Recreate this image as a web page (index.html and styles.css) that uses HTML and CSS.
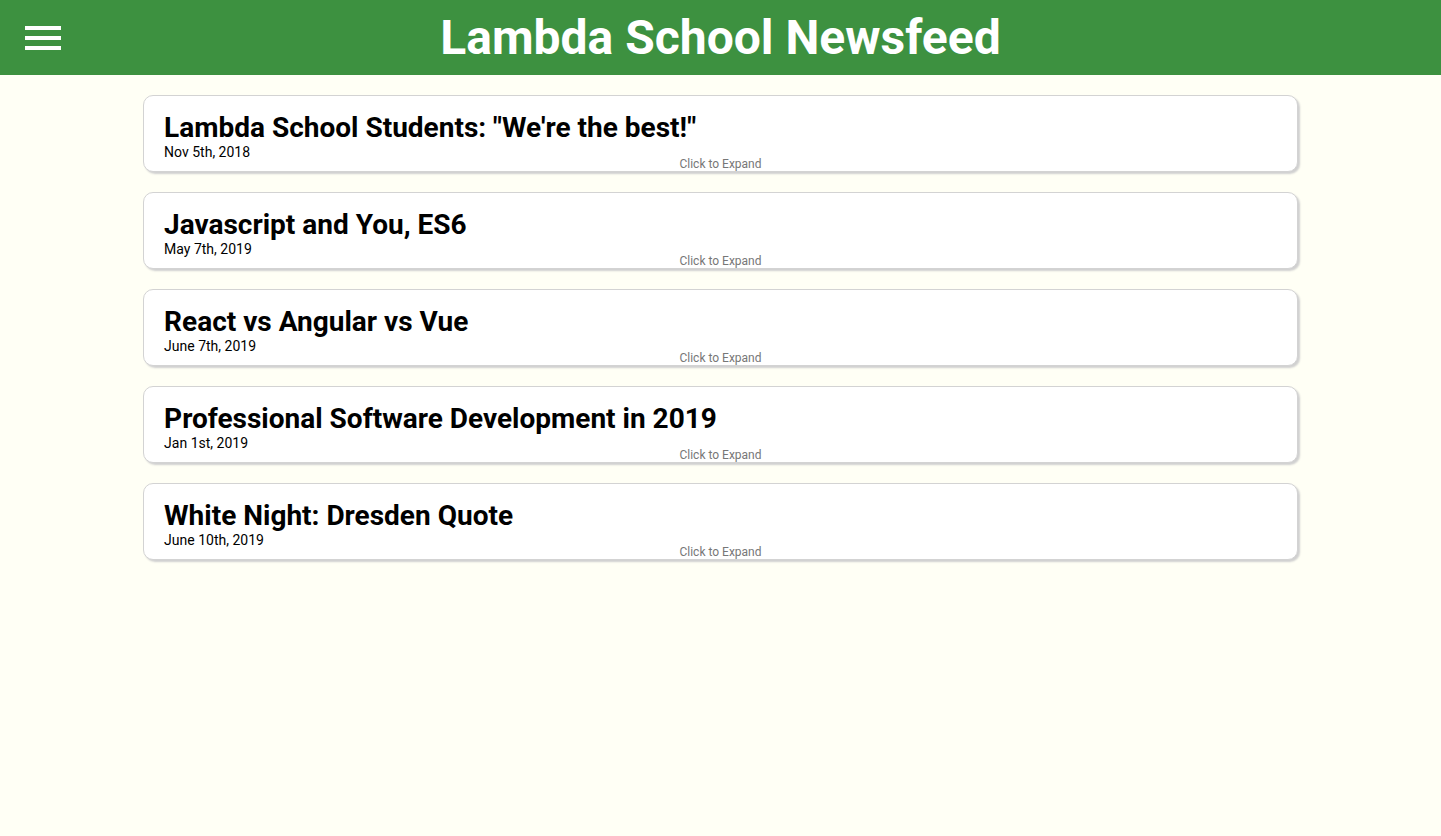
FILE: index.html
```html
<!DOCTYPE html>
<html lang="en">
<head>
<meta charset="utf-8">
<title>Lambda School Newsfeed</title>
<link rel="stylesheet" href="styles.css">
</head>
<body>
<header class="header">
  <div class="menu-button" aria-label="Menu">
    <span class="bar"></span>
    <span class="bar"></span>
    <span class="bar"></span>
  </div>
  <h1 class="title">Lambda School Newsfeed</h1>
</header>
<main class="articles">
  <div class="article">
    <h2 class="article-title">Lambda School Students: "We're the best!"</h2>
    <p class="date">Nov 5th, 2018</p>
    <span class="expand-button">Click to Expand</span>
  </div>
  <div class="article">
    <h2 class="article-title">Javascript and You, ES6</h2>
    <p class="date">May 7th, 2019</p>
    <span class="expand-button">Click to Expand</span>
  </div>
  <div class="article">
    <h2 class="article-title">React vs Angular vs Vue</h2>
    <p class="date">June 7th, 2019</p>
    <span class="expand-button">Click to Expand</span>
  </div>
  <div class="article">
    <h2 class="article-title">Professional Software Development in 2019</h2>
    <p class="date">Jan 1st, 2019</p>
    <span class="expand-button">Click to Expand</span>
  </div>
  <div class="article">
    <h2 class="article-title">White Night: Dresden Quote</h2>
    <p class="date">June 10th, 2019</p>
    <span class="expand-button">Click to Expand</span>
  </div>
</main>
</body>
</html>
```

FILE: styles.css
```css
html, body {
  margin: 0;
  padding: 0;
}

body {
  background: #fffff5;
  font-family: Roboto, "Liberation Sans", Arial, sans-serif;
  color: #000;
  min-height: 836px;
}

.header {
  position: relative;
  height: 75px;
  background: #3d9140;
  display: flex;
  align-items: center;
  justify-content: center;
}

.menu-button {
  position: absolute;
  left: 25px;
  top: 26px;
  display: flex;
  flex-direction: column;
  gap: 6px;
}

.bar {
  display: block;
  width: 36px;
  height: 4px;
  background: #fff;
}

.title {
  margin: 0;
  color: #fff;
  font-size: 48px;
  font-weight: 700;
  line-height: 75px;
}

.articles {
  display: flex;
  flex-direction: column;
  padding-top: 20px;
}

.article {
  position: relative;
  box-sizing: border-box;
  width: calc(80% + 2px);
  height: 77px;
  margin: 0 auto 20px;
  padding: 18px 20px 0;
  background: #fff;
  border: 1px solid #d3d3d3;
  border-radius: 10px;
  box-shadow: 2px 2px 2px #d0d0d0;
  overflow: hidden;
}

.article-title {
  margin: 0;
  font-size: 28px;
  font-weight: 700;
  line-height: 28px;
}

.date {
  margin: 2px 0 0;
  font-size: 14px;
  line-height: 16px;
}

.expand-button {
  position: absolute;
  left: 0;
  right: 0;
  bottom: 0;
  text-align: center;
  font-size: 12px;
  line-height: 14px;
  color: #777;
}
```
